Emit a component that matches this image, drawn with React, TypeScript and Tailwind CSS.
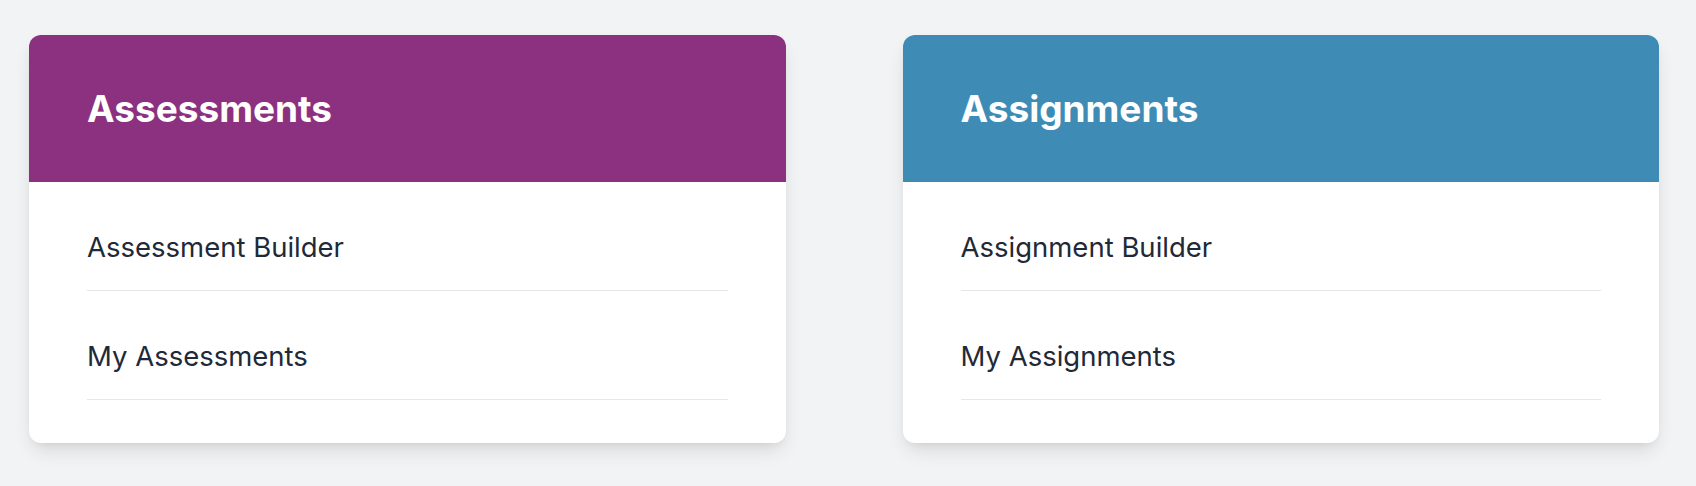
const sections = [
  {
    title: "Assessments",
    header: "bg-[#8b3180]",
    links: ["Assessment Builder", "My Assessments"],
  },
  {
    title: "Assignments",
    header: "bg-[#3e8cb6]",
    links: ["Assignment Builder", "My Assignments"],
  },
];

function SectionCard({
  title,
  header,
  links,
}: {
  title: string;
  header: string;
  links: string[];
}) {
  return (
    <div className="bg-white rounded-xl overflow-hidden shadow-[0_10px_20px_-4px_rgba(0,0,0,0.12),0_4px_8px_-4px_rgba(0,0,0,0.08)]">
      <div className={`${header} h-[147px] px-[58px] pt-[51px]`}>
        <h2 className="text-white text-[37px] leading-[46px] font-bold">{title}</h2>
      </div>
      <ul className="px-[58px] pb-[43px]">
        {links.map((link) => (
          <li key={link} className="pt-[47px] pb-[25px] border-b border-[#e5e7eb]">
            <a href="#" className="text-[#1f2937] text-[27.5px] leading-[36px]">
              {link}
            </a>
          </li>
        ))}
      </ul>
    </div>
  );
}

export default function App() {
  return (
    <div className="min-h-screen bg-[#f2f3f5] font-['Inter',sans-serif]">
      <div className="grid grid-cols-2 gap-[117px] pl-[29px] pr-[37px] pt-[35px]">
        {sections.map((s) => (
          <SectionCard key={s.title} {...s} />
        ))}
      </div>
    </div>
  );
}
